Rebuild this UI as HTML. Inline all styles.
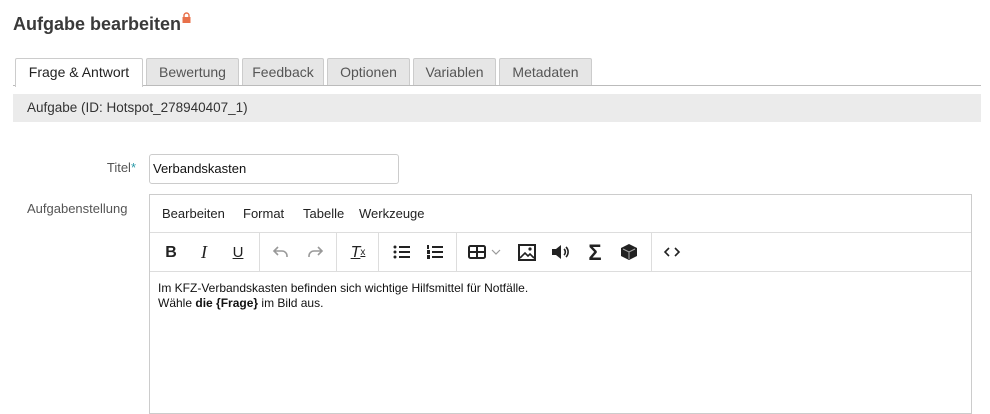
<!DOCTYPE html>
<html><head><meta charset="utf-8"><style>
*{box-sizing:border-box}
body{margin:0;width:990px;height:401px;overflow:hidden;background:#fff;font-family:"Liberation Sans",sans-serif;color:#333}
.abs{position:absolute}
h1{position:absolute;left:13px;top:14px;margin:0;font-size:18px;font-weight:bold;color:#3a3a3a;white-space:nowrap}
.tab{position:absolute;top:58px;height:27px;border:1px solid #ccc;border-bottom:none;background:#e6e6e6;color:#555;font-size:14px;text-align:center;line-height:26px;border-radius:2px 2px 0 0}
.tab.act{background:#fff;color:#222;height:29px}
.tb{position:absolute;top:233px;height:39px;display:flex;align-items:center;justify-content:center;width:34px;font-size:16px;color:#222}
.sep{position:absolute;top:233px;width:1px;height:39px;background:#ddd}
.mn{position:absolute;top:206px;font-size:13px;color:#222}
</style></head><body>
<h1>Aufgabe bearbeiten<svg style="vertical-align:top;margin-left:1px;margin-top:-2px" width="9" height="11" viewBox="0 0 9 11"><path d="M2 5V3.5a2.5 2.5 0 0 1 5 0V5" fill="none" stroke="#e8704a" stroke-width="1.4"/><rect x="0.5" y="5" width="8" height="6" fill="#e8704a"/></svg></h1>
<div class="abs" style="left:13px;top:85px;width:968px;height:1px;background:#bbb"></div>
<div class="tab act" style="left:15px;width:128px">Frage &amp; Antwort</div>
<div class="tab" style="left:146px;width:93px">Bewertung</div>
<div class="tab" style="left:242px;width:82px">Feedback</div>
<div class="tab" style="left:327px;width:83px">Optionen</div>
<div class="tab" style="left:413px;width:83px">Variablen</div>
<div class="tab" style="left:499px;width:93px">Metadaten</div>
<div class="abs" style="left:13px;top:94px;width:968px;height:28px;background:#ebebeb;font-size:13.5px;line-height:28px;padding-left:14px;color:#333">Aufgabe (ID: Hotspot_278940407_1)</div>
<div class="abs" style="left:0;top:160px;width:136px;text-align:right;font-size:13px;color:#555">Titel<span style="color:#2b9aa8">*</span></div>
<div class="abs" style="left:149px;top:154px;width:250px;height:30px;border:1px solid #ccc;border-radius:3px;font-size:13px;line-height:28px;padding-left:3px;color:#111">Verbandskasten</div>
<div class="abs" style="left:27px;top:201px;font-size:13px;color:#555">Aufgabenstellung</div>
<div class="abs" style="left:149px;top:194px;width:823px;height:220px;border:1px solid #ccc"></div>
<div class="abs" style="left:150px;top:232px;width:821px;height:1px;background:#ddd"></div>
<div class="abs" style="left:150px;top:271px;width:821px;height:1px;background:#ddd"></div>
<div class="mn" style="left:162px">Bearbeiten</div>
<div class="mn" style="left:243px">Format</div>
<div class="mn" style="left:303px">Tabelle</div>
<div class="mn" style="left:359px">Werkzeuge</div>
<div class="tb" style="left:154px;font-weight:bold">B</div>
<div class="tb" style="left:187px;font-style:italic;font-family:'Liberation Serif',serif;font-size:18px">I</div>
<div class="tb" style="left:221px;text-decoration:underline;font-size:15px">U</div>
<div class="sep" style="left:259px"></div>
<svg class="abs" style="left:272px;top:244px" width="18" height="16" viewBox="0 0 18 16"><path d="M6 3L2 7l4 4M2 7h8a5 5 0 0 1 5 5v1" fill="none" stroke="#999" stroke-width="1.6"/></svg>
<svg class="abs" style="left:306px;top:244px" width="18" height="16" viewBox="0 0 18 16"><path d="M12 3l4 4-4 4M16 7H8a5 5 0 0 0-5 5v1" fill="none" stroke="#999" stroke-width="1.6"/></svg>
<div class="sep" style="left:336px"></div>
<div class="tb" style="left:341px;font-style:italic;text-decoration:underline">T<span style="font-size:10px;font-style:normal">x</span></div>
<div class="sep" style="left:378px"></div>
<svg class="abs" style="left:393px;top:244px" width="18" height="16" viewBox="0 0 18 16"><g fill="#222"><circle cx="2" cy="3" r="1.5"/><circle cx="2" cy="8" r="1.5"/><circle cx="2" cy="13" r="1.5"/><rect x="6" y="2" width="11" height="2"/><rect x="6" y="7" width="11" height="2"/><rect x="6" y="12" width="11" height="2"/></g></svg>
<svg class="abs" style="left:426px;top:244px" width="18" height="16" viewBox="0 0 18 16"><g fill="#222"><rect x="6" y="2" width="11" height="2"/><rect x="6" y="7" width="11" height="2"/><rect x="6" y="12" width="11" height="2"/><rect x="1" y="1" width="2" height="4"/><rect x="1" y="6" width="3" height="4"/><rect x="1" y="11" width="3" height="4"/></g></svg>
<div class="sep" style="left:456px"></div>
<svg class="abs" style="left:468px;top:244px" width="18" height="16" viewBox="0 0 18 16"><rect x="1" y="2" width="16" height="12" rx="1.5" fill="none" stroke="#222" stroke-width="2"/><path d="M1 8h16M9 2v12" stroke="#222" stroke-width="2"/></svg>
<svg class="abs" style="left:491px;top:249px" width="10" height="6" viewBox="0 0 10 6"><path d="M1 1l4 4 4-4" fill="none" stroke="#999" stroke-width="1.2"/></svg>
<svg class="abs" style="left:518px;top:244px" width="18" height="17" viewBox="0 0 18 17"><rect x="1" y="1" width="16" height="15" fill="none" stroke="#222" stroke-width="2"/><path d="M2 14l5-5 3 3 2-2 4 4" fill="none" stroke="#222" stroke-width="1.6"/><circle cx="12" cy="5" r="1.6" fill="#222"/></svg>
<svg class="abs" style="left:551px;top:244px" width="20" height="16" viewBox="0 0 20 16"><path d="M1 5h4l5-4v14l-5-4H1z" fill="#222"/><path d="M13 5a4 4 0 0 1 0 6M15 3a7 7 0 0 1 0 10" fill="none" stroke="#222" stroke-width="1.6"/></svg>
<div class="tb" style="left:578px;font-size:22px;font-weight:bold">Σ</div>
<svg class="abs" style="left:620px;top:243px" width="18" height="18" viewBox="0 0 18 18"><path d="M9 1l8 4v8l-8 4-8-4V5z" fill="#222"/><path d="M3 6l6 3 6-3M9 9v7" stroke="#aaa" stroke-width="1" fill="none"/></svg>
<div class="sep" style="left:651px"></div>
<svg class="abs" style="left:663px;top:246px" width="18" height="12" viewBox="0 0 18 12"><path d="M6 2L2 6l4 4M12 2l4 4-4 4" fill="none" stroke="#222" stroke-width="1.6"/></svg>
<div class="abs" style="left:158px;top:281px;font-size:12px;line-height:15px;color:#111">Im KFZ-Verbandskasten befinden sich wichtige Hilfsmittel für Notfälle.<br>Wähle <b>die {Frage}</b> im Bild aus.</div>
</body></html>
